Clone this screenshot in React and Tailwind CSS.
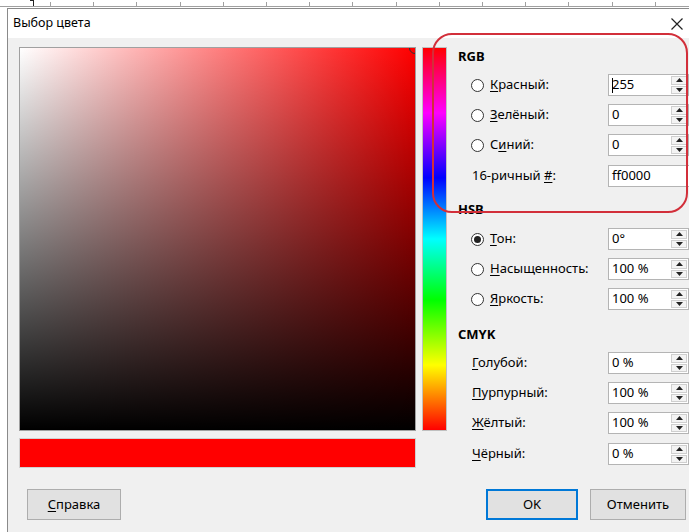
import React from 'react'

const font = { fontFamily: '"Noto Sans", "Open Sans", sans-serif' }

function Arrow({ up }) {
  return (
    <svg width="7" height="4" viewBox="0 0 7 4">
      {up ? <path d="M0 4 L3.5 0 L7 4 Z" fill="#222" /> : <path d="M0 0 L3.5 4 L7 0 Z" fill="#222" />}
    </svg>
  )
}

function Spin({ value, caret, wide }) {
  return (
    <div className={`flex h-[22px] border border-[#b4b4b4] bg-white ${wide ? 'w-[96px]' : 'w-[81px]'}`}>
      <div className="flex flex-1 items-center pl-[3px] text-[13px] text-black">
        {caret && <span className="mr-[-1px] inline-block h-[15px] w-[1px] bg-black" />}
        {value}
      </div>
      {!wide && (
        <div className="flex w-[17px] flex-col gap-[1px] py-[1px] pr-[1px]">
          <div className="flex flex-1 items-center justify-center border border-[#cfcfcf] bg-[#f3f3f3]">
            <Arrow up />
          </div>
          <div className="flex flex-1 items-center justify-center border border-[#cfcfcf] bg-[#f3f3f3]">
            <Arrow />
          </div>
        </div>
      )}
    </div>
  )
}

function Radio({ checked }) {
  return (
    <span className="flex h-[13px] w-[13px] items-center justify-center rounded-full border border-[#333] bg-white">
      {checked && <span className="h-[7px] w-[7px] rounded-full bg-[#222]" />}
    </span>
  )
}

// one row of the right-hand panel: optional radio, label, spin box
function Row({ radio, checked, label, value, caret, wide, className = '' }) {
  return (
    <div className={`flex h-[30px] items-center ${className}`}>
      <div className={`flex w-[150px] items-center ${radio ? 'pl-[13px]' : 'pl-[14px]'}`}>
        {radio && <Radio checked={checked} />}
        <span className={`text-[13px] text-black ${radio ? 'ml-[6px]' : ''}`}>{label}</span>
      </div>
      <Spin value={value} caret={caret} wide={wide} />
    </div>
  )
}

function Head({ children, className = '' }) {
  return <div className={`h-[18px] text-[13px] font-bold leading-[18px] text-black ${className}`}>{children}</div>
}

const U = ({ children }) => <span className="underline underline-offset-2">{children}</span>

const ticks = Array.from({ length: 16 }, (_, i) => 50 + i * 43.2)

export default function App() {
  return (
    <div className="relative h-[532px] w-[689px] overflow-hidden bg-white" style={font}>
      {/* ruler strip above the dialog */}
      <div className="relative h-[8px]">
        <div className="absolute left-0 right-0 top-[6px] h-[1px] bg-[#a0a0a0]" />
        {ticks.map(x => (
          <div key={x} className="absolute top-[2px] h-[4px] w-[1px] bg-[#a0a0a0]" style={{ left: x }} />
        ))}
        <div className="absolute left-[33px] top-0 h-[6px] w-[1px] bg-[#222]" />
        <div className="absolute left-[30px] top-0 h-[1px] w-[4px] bg-[#222]" />
      </div>

      {/* dialog window */}
      <div className="ml-[7px] w-[700px] border-l border-t border-[#8a8a8a]">
        <div className="flex h-[29px] items-center bg-white pl-[5px]">
          <span className="text-[12.5px] text-black">Выбор цвета</span>
          <svg className="ml-[580px]" width="12" height="12" viewBox="0 0 12 12">
            <path d="M0.5 0.5 L11.5 11.5 M11.5 0.5 L0.5 11.5" stroke="#222" strokeWidth="1.2" />
          </svg>
        </div>

        <div className="h-[500px] bg-[#f0f0f0] pl-[11px] pt-[9px]">
          <div className="flex">
            <div className="flex flex-col">
              <div className="flex">
                {/* saturation / brightness field */}
                <div className="relative h-[384px] w-[397px] overflow-hidden border border-[#a0a0a0] bg-[linear-gradient(to_right,#ffffff,#ff0000)]">
                  <div className="absolute inset-0 bg-[linear-gradient(to_bottom,rgba(0,0,0,0),#000000)]" />
                  <div className="absolute right-[-6px] top-[-6px] h-[12px] w-[12px] rounded-full border border-[#333]" />
                </div>
                {/* hue strip */}
                <div className="ml-[6px] h-[384px] w-[25px] border border-[#c0c0c0] bg-[linear-gradient(to_bottom,#ff0000,#ff00ff_17%,#0000ff_34%,#00ffff_50%,#00ff00_66%,#ffff00_83%,#ff0000)]" />
              </div>
              {/* current colour preview */}
              <div className="mt-[7px] h-[30px] w-[397px] border border-[#d0d0d0] bg-[#ff0000]" />
            </div>

            <div className="ml-[11px] flex flex-col">
              <Head>RGB</Head>
              <div className="mt-[5px]">
                <Row radio label={<><U>К</U>расный:</>} value="255" caret />
                <Row radio label={<><U>З</U>елёный:</>} value="0" />
                <Row radio label={<>С<U>и</U>ний:</>} value="0" />
                <Row label={<>16-ричный <U>#</U>:</>} value="ff0000" wide className="mt-[1px]" />
              </div>

              <Head className="mt-[9px]">HSB</Head>
              <div className="mt-[6px]">
                <Row radio checked label={<><U>Т</U>он:</>} value="0°" />
                <Row radio label={<><U>Н</U>асыщенность:</>} value="100 %" />
                <Row radio label={<><U>Я</U>ркость:</>} value="100 %" />
              </div>

              <Head className="mt-[11px]">CMYK</Head>
              <div className="mt-[5px]">
                <Row label={<><U>Г</U>олубой:</>} value="0 %" />
                <Row label={<><U>П</U>урпурный:</>} value="100 %" />
                <Row label={<><U>Ж</U>ёлтый:</>} value="100 %" />
                <Row label={<><U>Ч</U>ёрный:</>} value="0 %" className="mt-[1px]" />
              </div>
            </div>
          </div>

          {/* bottom buttons */}
          <div className="mt-[20px] flex w-[667px] items-center">
            <button className="ml-[8px] h-[31px] w-[94px] border border-[#adadad] bg-[#e1e1e1] text-[13px] text-black">
              <U>С</U>правка
            </button>
            <button className="ml-auto h-[31px] w-[92px] border-2 border-[#0078d7] bg-[#e1e1e1] text-[13px] text-black">
              OK
            </button>
            <button className="ml-[12px] h-[31px] w-[96px] border border-[#adadad] bg-[#e1e1e1] text-[13px] text-black">
              Отменить
            </button>
          </div>
        </div>
      </div>

      {/* red highlight drawn over the RGB block */}
      <div className="absolute left-[432px] top-[33px] h-[180px] w-[256px] rounded-[20px] border-2 border-[#d22f3a]" />
    </div>
  )
}
